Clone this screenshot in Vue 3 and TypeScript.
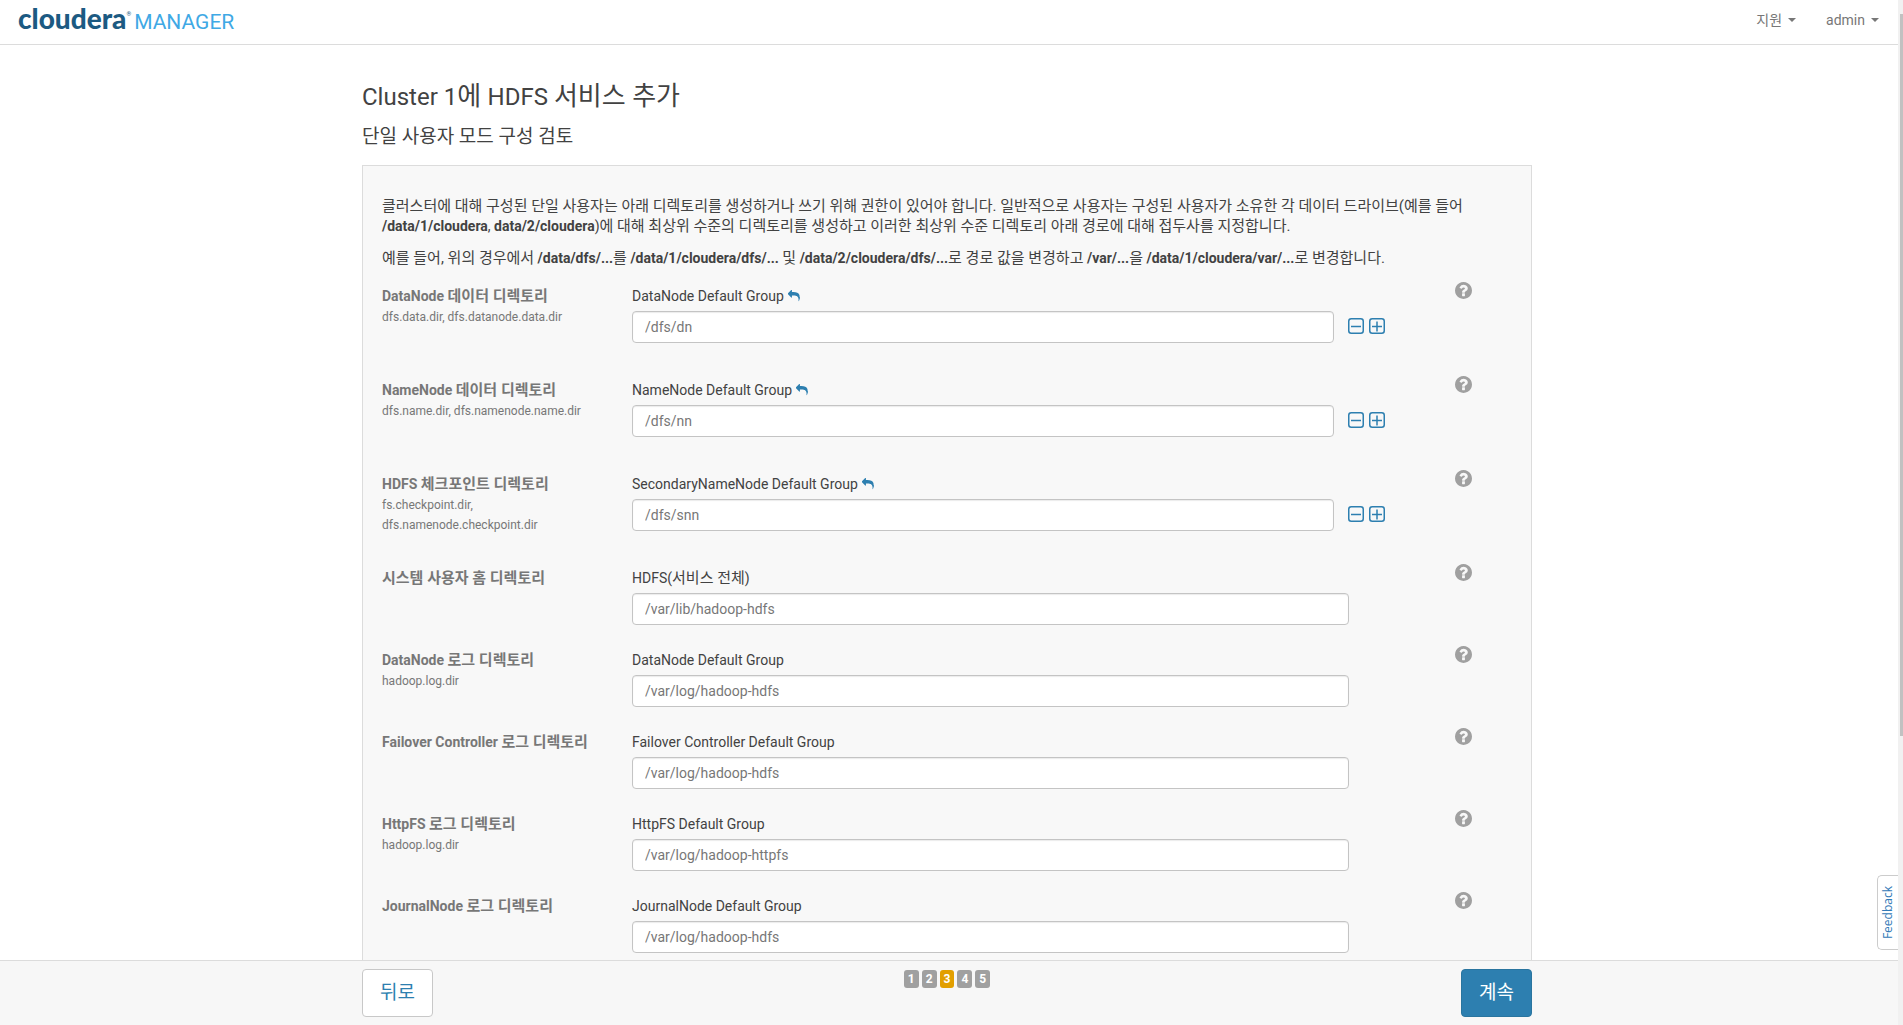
<script setup lang="ts">
interface Setting {
  id: string
  title: string
  keys?: string
  group: string
  value: string
  list?: boolean
}

interface Run {
  text: string
  ko: boolean
}

const settings: Setting[] = [
  { id: 'dn-data', title: 'DataNode 데이터 디렉토리', keys: 'dfs.data.dir, dfs.datanode.data.dir', group: 'DataNode Default Group', value: '/dfs/dn', list: true },
  { id: 'nn-data', title: 'NameNode 데이터 디렉토리', keys: 'dfs.name.dir, dfs.namenode.name.dir', group: 'NameNode Default Group', value: '/dfs/nn', list: true },
  { id: 'checkpoint', title: 'HDFS 체크포인트 디렉토리', keys: 'fs.checkpoint.dir, dfs.namenode.checkpoint.dir', group: 'SecondaryNameNode Default Group', value: '/dfs/snn', list: true },
  { id: 'home', title: '시스템 사용자 홈 디렉토리', group: 'HDFS(서비스 전체)', value: '/var/lib/hadoop-hdfs' },
  { id: 'dn-log', title: 'DataNode 로그 디렉토리', keys: 'hadoop.log.dir', group: 'DataNode Default Group', value: '/var/log/hadoop-hdfs' },
  { id: 'fc-log', title: 'Failover Controller 로그 디렉토리', group: 'Failover Controller Default Group', value: '/var/log/hadoop-hdfs' },
  { id: 'httpfs-log', title: 'HttpFS 로그 디렉토리', keys: 'hadoop.log.dir', group: 'HttpFS Default Group', value: '/var/log/hadoop-httpfs' },
  { id: 'jn-log', title: 'JournalNode 로그 디렉토리', group: 'JournalNode Default Group', value: '/var/log/hadoop-hdfs' },
]

const steps = [1, 2, 3, 4, 5]
const currentStep = 3

// Hangul is set one step larger than the Latin text beside it.
function runs(text: string): Run[] {
  return text
    .split(/([가-힣][가-힣 ]*)/)
    .filter((part) => part !== '')
    .map((part) => ({ text: part, ko: /[가-힣]/.test(part) }))
}
</script>

<template>
  <div class="page">
    <div class="app">
      <header class="topbar">
        <a href="#" class="brand"><span class="brand-name">cloudera</span><span class="brand-mark">®</span><span class="brand-product">MANAGER</span></a>
        <nav class="menu">
          <a href="#" class="menu-item">지원<i class="caret"></i></a>
          <a href="#" class="menu-item">admin<i class="caret"></i></a>
        </nav>
      </header>

      <main class="content">
        <div class="container">
          <h1><span v-for="(r, i) in runs('Cluster 1에 HDFS 서비스 추가')" :key="i" :class="{ 'ko-title': r.ko }">{{ r.text }}</span></h1>
          <h2>단일 사용자 모드 구성 검토</h2>

          <section class="panel">
            <p>
              <span class="ko">클러스터에 대해 구성된 단일 사용자는 아래 디렉토리를 생성하거나 쓰기 위해 권한이 있어야 합니다. 일반적으로 사용자는 구성된 사용자가 소유한 각 데이터 드라이브(예를 들어</span> <b>/data/1/cloudera</b>, <b>data/2/cloudera</b>)<span class="ko">에 대해 최상위 수준의 디렉토리를 생성하고 이러한 최상위 수준 디렉토리 아래 경로에 대해 접두사를 지정합니다.</span>
            </p>
            <p>
              <span class="ko">예를 들어, 위의 경우에서</span> <b>/data/dfs/...</b><span class="ko">를</span> <b>/data/1/cloudera/dfs/...</b> <span class="ko">및</span> <b>/data/2/cloudera/dfs/...</b><span class="ko">로 경로 값을 변경하고</span> <b>/var/...</b><span class="ko">을</span> <b>/data/1/cloudera/var/...</b><span class="ko">로 변경합니다.</span>
            </p>

            <div class="settings">
              <div v-for="s in settings" :key="s.id" class="setting" :class="{ 'is-list': s.list }">
                <div class="setting-name">
                  <strong><span v-for="(r, i) in runs(s.title)" :key="i" :class="{ ko: r.ko }">{{ r.text }}</span></strong>
                  <small v-if="s.keys">{{ s.keys }}</small>
                </div>
                <div class="setting-field">
                  <div class="group">
                    <label :for="s.id"><span v-for="(r, i) in runs(s.group)" :key="i" :class="{ ko: r.ko }">{{ r.text }}</span></label>
                    <button v-if="s.list" type="button" class="icon-button" aria-label="재설정">
                      <svg class="reply" viewBox="0 0 1792 1792"><path d="M1792 1120q0 166-127 451-3 7-10.500 24t-13.500 30-13 22q-12 17-28 17-15 0-23.500-10t-8.500-25q0-9 2.500-26.500t2.500-23.500q5-68 5-123 0-112-19.500-200.500t-54-153.500-88-112.500-115-81-142.500-49.500-163-24.500-185.500-7.500h-224v256q0 26-19 45t-45 19-45-19l-512-512q-19-19-19-45t19-45l512-512q19-19 45-19t45 19 19 45v256h224q713 0 875 403 53 134 53 333z" /></svg>
                    </button>
                  </div>
                  <div class="entry">
                    <input :id="s.id" type="text" :value="s.value" />
                    <div v-if="s.list" class="entry-actions">
                      <button type="button" class="icon-button" aria-label="제거">
                        <svg class="square" viewBox="0 0 16 16"><rect x="0.75" y="0.75" width="14.500" height="14.500" rx="2.500" /><path d="M3 8.500h10" /></svg>
                      </button>
                      <button type="button" class="icon-button" aria-label="추가">
                        <svg class="square" viewBox="0 0 16 16"><rect x="0.75" y="0.75" width="14.500" height="14.500" rx="2.500" /><path d="M3 8.500h10M8 3.500v10" /></svg>
                      </button>
                    </div>
                  </div>
                </div>
                <button type="button" class="icon-button help" aria-label="도움말">
                  <svg viewBox="128 128 1536 1536"><path d="M1024 1376v-192q0-14-9-23t-23-9h-192q-14 0-23 9t-9 23v192q0 14 9 23t23 9h192q14 0 23-9t9-23zm256-672q0-88-55.500-163t-138.500-116-170-41q-243 0-371 213-15 24 8 42l132 100q7 6 19 6 16 0 25-12 53-68 86-92 34-24 86-24 48 0 85.500 26t37.500 59q0 38-20 61t-68 45q-63 28-115.500 86.500t-52.500 125.500v36q0 14 9 23t23 9h192q14 0 23-9t9-23q0-19 21.500-49.500t54.500-49.500q32-18 49-28.500t46-35 44.500-48 28-60.500 12.500-81zm384 192q0 209-103 385.500t-279.500 279.500-385.500 103-385.500-103-279.500-279.500-103-385.500 103-385.500 279.500-279.500 385.500-103 385.500 103 279.500 279.500 103 385.500z" /></svg>
                </button>
              </div>
            </div>
          </section>
        </div>
      </main>

      <footer class="wizard-bar">
        <div class="container wizard-inner">
          <button type="button" class="btn">뒤로</button>
          <ol class="steps">
            <li v-for="n in steps" :key="n" :class="{ active: n === currentStep }">{{ n }}</li>
          </ol>
          <button type="button" class="btn btn-primary">계속</button>
        </div>
      </footer>

      <button type="button" class="feedback">Feedback</button>
    </div>
    <div class="scrollbar"><div class="scrollbar-thumb"></div></div>
  </div>
</template>

<style>
body {
  margin: 0;
  background: #fff;
}
</style>

<style scoped>
* {
  box-sizing: border-box;
}

.page {
  display: flex;
  height: 100vh;
  font-family: Roboto, "Noto Sans CJK KR", sans-serif;
  font-size: 14px;
  line-height: 20px;
  color: #424242;
}

.app {
  position: relative;
  display: flex;
  flex: 1;
  flex-direction: column;
  min-width: 0;
}

button,
input {
  font: inherit;
}

a {
  text-decoration: none;
}

.ko {
  font-size: 15px;
}

.ko-title {
  font-size: 26px;
}

.topbar {
  display: flex;
  flex: none;
  justify-content: space-between;
  align-items: center;
  height: 45px;
  padding: 0 19px 4px 18px;
  border-bottom: 1px solid #dcdcdc;
}

.brand {
  display: flex;
  align-items: baseline;
  font-size: 21px;
  line-height: 40px;
}

.brand-name {
  font-family: Lato, sans-serif;
  font-size: 28px;
  font-weight: 900;
  color: #1c5a82;
}

.brand-mark {
  align-self: flex-start;
  margin-right: 3px;
  font-size: 6px;
  line-height: 32px;
  color: #1c5a82;
}

.brand-product {
  color: #3fa9e5;
}

.menu {
  display: flex;
  gap: 30px;
}

.menu-item {
  display: flex;
  gap: 6px;
  align-items: center;
  color: #777;
}

.caret {
  border: 4px solid transparent;
  border-top-color: #777;
  border-bottom: 0;
}

.content {
  flex: 1;
  min-height: 0;
  padding-right: 4px;
  overflow: hidden;
}

.container {
  width: 1170px;
  max-width: 100%;
  margin: 0 auto;
}

h1 {
  margin: 34px 0 11px;
  font-size: 24px;
  font-weight: 400;
  line-height: 34px;
}

h2 {
  margin: 0 0 16px;
  font-size: 19px;
  font-weight: 400;
  line-height: 24px;
}

.panel {
  padding: 30px 19px 40px;
  border: 1px solid #dcdcdc;
  background: #f8f8f8;
}

p {
  margin: 0 0 12px;
  word-break: keep-all;
}

.settings {
  padding: 6px 40px 0 0;
}

.setting {
  display: flex;
  align-items: flex-start;
  height: 82px;
}

.setting.is-list {
  height: 94px;
}

.setting-name {
  display: flex;
  flex: none;
  flex-direction: column;
  gap: 1px;
  width: 250px;
  padding-right: 30px;
  color: #777;
}

strong {
  height: 20px;
}

small {
  font-size: 12px;
}

.setting-field {
  flex: none;
  width: 717px;
}

.group {
  display: flex;
  gap: 4px;
  align-items: center;
  height: 20px;
  margin-bottom: 5px;
}

.entry {
  display: flex;
  align-items: center;
}

.entry input {
  flex: 1;
  height: 32px;
  padding: 0 12px 1px;
  border: 1px solid #c4c4c4;
  border-radius: 4px;
  background: #fff;
  box-shadow: inset 0 1px 1px rgba(0, 0, 0, 0.08);
  color: #777;
}

.is-list .setting-field {
  width: 753px;
}

.entry-actions {
  display: flex;
  gap: 5px;
  padding: 0 0 2px 14px;
}

.icon-button {
  display: flex;
  padding: 0;
  border: 0;
  background: none;
  color: #2d7fb0;
}

.icon-button svg {
  width: 16px;
  height: 16px;
  fill: currentColor;
}

.icon-button .reply {
  width: 12px;
  height: 12px;
}

.icon-button .square {
  fill: none;
  stroke: currentColor;
  stroke-width: 1.5;
}

.icon-button.help {
  margin: -4px 0 0 auto;
  color: #a0a0a0;
}

.help svg {
  width: 17px;
  height: 17px;
}

.wizard-bar {
  flex: none;
  height: 65px;
  padding: 8px 4px 0 0;
  border-top: 1px solid #dcdcdc;
  background: #f7f7f7;
}

.wizard-inner {
  display: flex;
  justify-content: space-between;
  align-items: flex-start;
}

.btn {
  height: 48px;
  padding: 0 17px;
  border: 1px solid #c8c8c8;
  border-radius: 4px;
  background: #fff;
  font-size: 19px;
  color: #2d7fb0;
}

.btn-primary {
  border-color: #2a759f;
  background: #2d7fb0;
  color: #fff;
}

.steps {
  display: flex;
  gap: 3px;
  margin: 1px 0 0;
  padding: 0;
  list-style: none;
}

.steps li {
  padding: 0 4px;
  border-radius: 3px;
  background: #a0a0a0;
  font-size: 12px;
  font-weight: 700;
  line-height: 18px;
  color: #fff;
}

.steps .active {
  background: #e29f00;
}

.feedback {
  position: absolute;
  right: 0;
  bottom: 75px;
  padding: 10px 3px;
  border: 1px solid #ccc;
  border-right: 0;
  border-radius: 5px 0 0 5px;
  background: #fff;
  font-family: "Open Sans", sans-serif;
  font-size: 12px;
  line-height: 14px;
  color: #337ab7;
  writing-mode: sideways-lr;
}

.scrollbar {
  flex: none;
  width: 5px;
  padding: 14px 0 0 2px;
  background: #f1f1f1;
}

.scrollbar-thumb {
  height: 71.4%;
  background: #c1c1c1;
}
</style>
